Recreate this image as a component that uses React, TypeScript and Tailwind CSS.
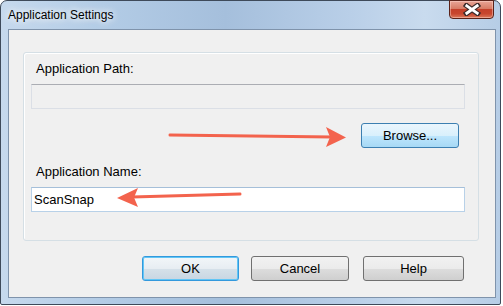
import React from 'react';

function Win7Button({ label, variant = 'normal', className = '' }: { label: string; variant?: 'normal' | 'hover' | 'default'; className?: string }) {
  const skin =
    variant === 'hover'
      ? 'border-[#3c7fb1] bg-[linear-gradient(#eaf6fd_0%,#d9f0fc_50%,#bee6fd_51%,#a7d9f5_100%)]'
      : variant === 'default'
        ? 'border-[#3399dd] shadow-[inset_0_0_0_1px_#62c6f5] bg-[linear-gradient(#f2f6f9_0%,#e7edf2_50%,#d6e1e9_51%,#c8d6e2_100%)]'
        : 'border-[#707070] bg-[linear-gradient(#f2f2f2_0%,#ebebeb_50%,#dddddd_51%,#cfcfcf_100%)]';
  return (
    <div className={`h-[25px] rounded-[3px] border flex items-center justify-center text-[13px] text-black ${skin} ${className}`}>
      <span className="mt-[1px]">{label}</span>
    </div>
  );
}

export default function App() {
  return (
    <div className="relative w-[503px] h-[306px] bg-white font-['Liberation_Sans',Arial,sans-serif] text-black">
      {/* Window frame */}
      <div className="w-[501px] h-[305px] rounded-t-[7px] rounded-b-[2px] border border-[#3e4a5a] bg-[linear-gradient(90deg,#c6d9ed_0%,#b3cce6_20%,#a5bfdc_45%,#b9cfe8_70%,#c9dbee_85%,#b6cde6_100%)] flex flex-col pl-[7px] pr-[4px] pb-[6px]">
        {/* Title bar */}
        <div className="h-[28px] flex items-start justify-between">
          <span className="pt-[7px] text-[12px] leading-[14px] [text-shadow:0_0_6px_#ffffff,0_0_10px_#ffffff]">
            Application Settings
          </span>
          <div className="mt-[-1px] mr-[2px] w-[45px] h-[19px] rounded-b-[4px] border border-[#5a2219] bg-[linear-gradient(#e9a597_0%,#d77c66_45%,#c4402a_50%,#c8462e_75%,#dc7a5c_100%)] shadow-[inset_0_0_0_1px_rgba(255,220,210,0.45)] flex items-center justify-center">
            <svg width="18" height="13" viewBox="0 0 18 13">
              <path d="M3.5 2.5 L14.5 10.5 M14.5 2.5 L3.5 10.5" stroke="#3b2a2a" strokeWidth="5.2" strokeLinecap="square" />
              <path d="M3.8 2.8 L14.2 10.2 M14.2 2.8 L3.8 10.2" stroke="#ffffff" strokeWidth="2.8" strokeLinecap="square" />
            </svg>
          </div>
        </div>

        {/* Client area */}
        <div className="flex-1 border border-[#7f93ab] bg-[#f0f0f0] flex flex-col">
          {/* Group box */}
          <div className="ml-[14px] mt-[22px] w-[456px] h-[189px] rounded-[3px] border border-[#d5dfe5] shadow-[inset_1px_1px_0_#ffffff] flex flex-col">
            <div className="ml-[12px] mt-[8px] text-[13px] leading-[15px]">Application Path:</div>
            <div className="ml-[7px] mt-[8px] w-[434px] h-[25px] border border-[#dbdfe6] border-t-[#abadb3] bg-[#f0f0f0]" />
            <div className="mt-[14px] mr-[19px] flex justify-end">
              <Win7Button label="Browse..." variant="hover" className="w-[98px]" />
            </div>
            <div className="ml-[12px] mt-[16px] text-[13px] leading-[15px]">Application Name:</div>
            <div className="ml-[7px] mt-[8px] w-[434px] h-[25px] border border-[#b8d1e8] border-t-[#a5bfd9] bg-white flex items-center pl-[2px] text-[13px]">
              ScanSnap
            </div>
          </div>

          {/* Dialog buttons */}
          <div className="mt-[15px] ml-[133px] flex">
            <Win7Button label="OK" variant="default" className="w-[97px]" />
            <Win7Button label="Cancel" className="w-[98px] ml-[12px]" />
            <Win7Button label="Help" className="w-[101px] ml-[14px]" />
          </div>
        </div>
      </div>

      {/* Annotation arrows */}
      <svg className="absolute inset-0 pointer-events-none" width="503" height="306" viewBox="0 0 503 306">
        <g fill="#f3634d" stroke="#f3634d">
          <line x1="170" y1="135" x2="332" y2="137" strokeWidth="3" strokeLinecap="round" />
          <polygon points="346,137.5 326,127 330,137 326,147" stroke="none" />
          <line x1="240" y1="194" x2="132" y2="197" strokeWidth="3" strokeLinecap="round" />
          <polygon points="117,198 138,188 134,197.5 138,207" stroke="none" />
        </g>
      </svg>
    </div>
  );
}
